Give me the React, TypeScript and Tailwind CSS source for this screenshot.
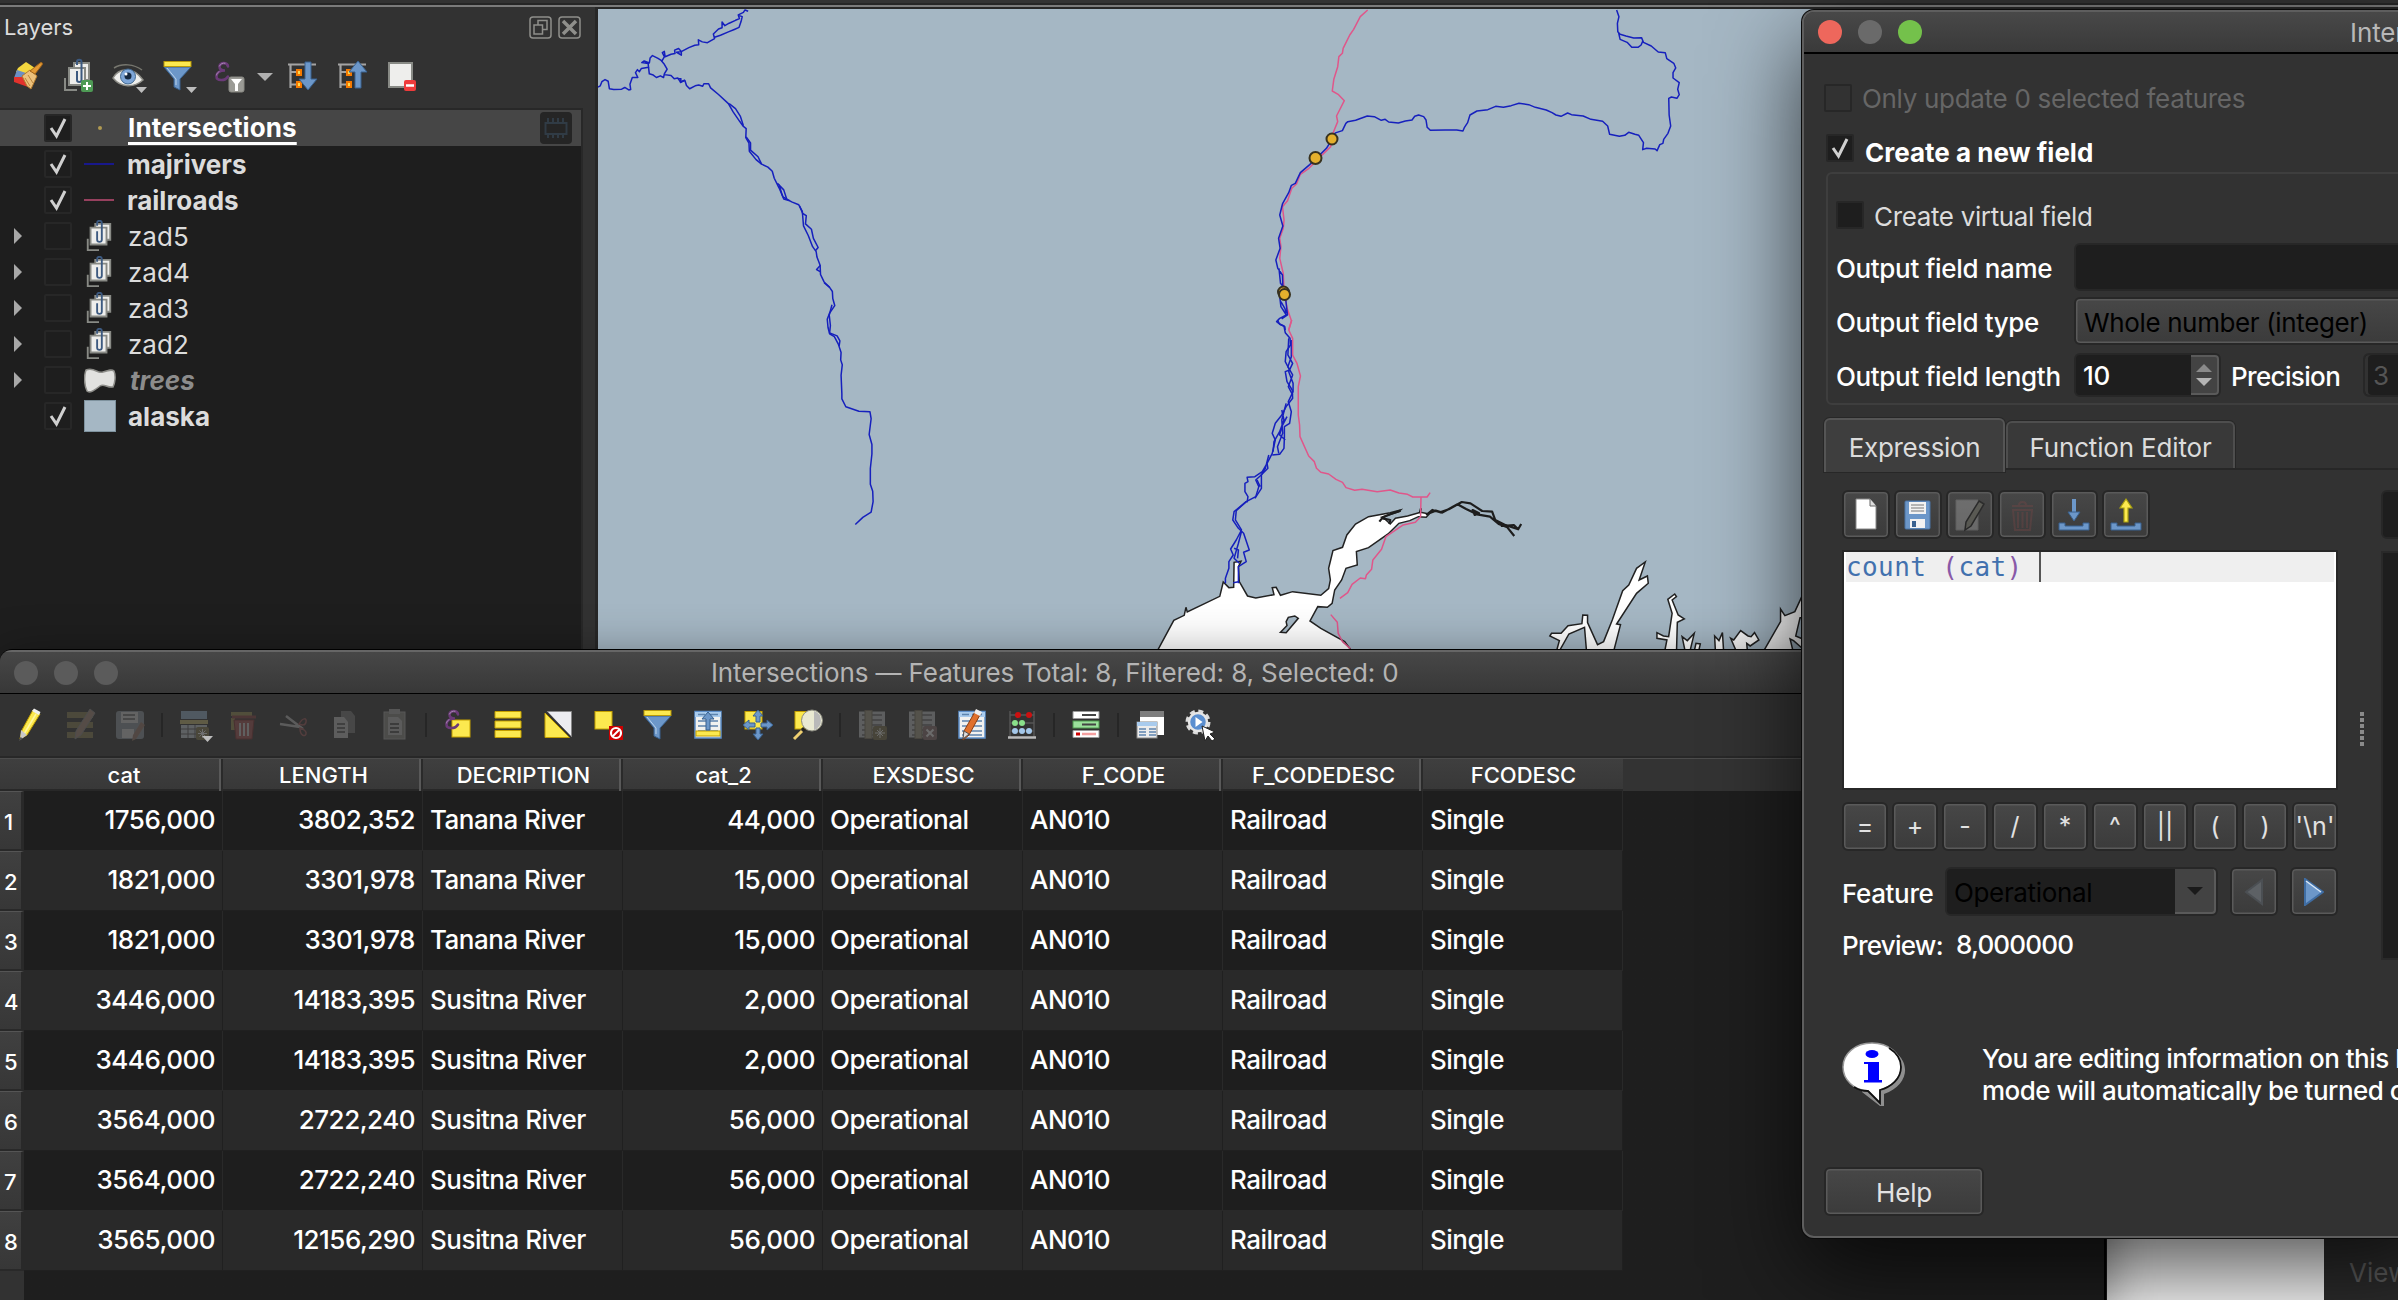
import type { ReactNode } from 'react'

/* ---------- shared pieces ---------- */

const Check = ({ className = '', on = false }: { className?: string; on?: boolean }) => (
  <span className={`flex h-7 w-7 shrink-0 items-center justify-center rounded-xs border-2 border-[#272727] ${className}`}>
    {on && (
      <svg width="20" height="22" viewBox="0 0 20 22" fill="none" stroke="#d0d0d0" strokeWidth="3">
        <path d="M3 11l5.5 8L17 2" />
      </svg>
    )}
  </span>
)

const Button = ({ className = '', children }: { className?: string; children?: ReactNode }) => (
  <div
    className={`flex items-center justify-center rounded-md border-2 border-[#272727] bg-linear-to-b from-[#474747] to-[#3b3b3b] text-[#e2e2e2] shadow-[inset_0_0_0_1.5px_#5a5a5a] ${className}`}
  >
    {children}
  </div>
)

const Ico = ({ children, dim = false }: { children: ReactNode; dim?: boolean }) => (
  <svg className={`shrink-0 ${dim ? 'opacity-30' : ''}`} width="50" height="50" viewBox="0 0 50 50">
    {children}
  </svg>
)

const Sep = () => (
  <div className="flex w-[14px] shrink-0 justify-center">
    <div className="h-6 w-0.5 bg-[#262626]" />
  </div>
)

const Caret = ({ x = 32, y = 31 }: { x?: number; y?: number }) => <path d={`M${x} ${y}h11l-5.500 6z`} fill="#bdbdbd" />

const Epsilon = ({ x, y }: { x: number; y: number }) => (
  <g transform={`translate(${x} ${y})`} fill="none" stroke="#6b3a78" strokeWidth="2.600" strokeLinecap="round">
    <path d="M13 4.500C12.500 0 5 0 4.500 4.500c0 3 2.500 4 5.500 4C5 8.500 1.500 10.500 1.500 14.500c0 4.500 8.500 5 11.500 0" />
    <path d="M4.500 4c1-2.500 3.500-3.200 5.500-2.800M1.500 13c.3-1.500 1-2.500 2.500-3.200" stroke="#a98ab5" strokeWidth="1" />
  </g>
)

const Funnel = () => (
  <>
    <path d="M11 16l10 12v8l6 3V28l11-12z" fill="#6c97c9" stroke="#38618f" strokeWidth="1" />
    <path d="M14 17l9 11v6" stroke="#b9d2ea" fill="none" />
    <rect x="11" y="10.500" width="27" height="5" fill="#fce94f" stroke="#b99a08" />
  </>
)

/* ---------- layers panel ---------- */

const GroupShape = ({ w = 32, h = 34 }: { w?: number; h?: number }) => (
  <svg width={w} height={h} viewBox="0 0 32 34">
    <path d="M4 20v12h12" fill="none" stroke="#888a85" strokeWidth="2" />
    <path d="M12 4h16v17H12z" fill="#eeeeec" stroke="#888a85" strokeWidth="2" />
    <path d="M7 8h17v18H7z" fill="#eeeeec" stroke="#888a85" strokeWidth="2" />
    <path d="M14 12v9c0 3 5 3 5 0V3c0-3-5-3-5 0v3" fill="none" stroke="#3d5a80" strokeWidth="2" />
  </svg>
)

const Tree = () => (
  <>
    <path d="M10 13.500h28M12.500 13v24M12 21h8M12 33.500h8" stroke="#a3a3a3" strokeWidth="2.200" fill="none" />
    <path d="M18 18h6v7h-6zM18 30h6v7h-6z" fill="#f57900" />
    <path d="M20 20h2v3h-2zM20 32h2v3h-2z" fill="#fcd94f" />
  </>
)

const LayersToolbar = () => (
  <div className="flex h-[50px] items-center pl-[3px]">
    <Ico>
      <path d="M15 17l8-6 9 6-6 8-13-4z" fill="#f3d73f" />
      <path d="M14 19l9 3-4 9-8-4z" fill="#6c8fc4" />
      <path d="M11 26l9 0 5 10-14-5z" fill="#e2322c" />
      <path d="M19 25l8-6 7 6-6 13-4-3z" fill="#ecc17c" stroke="#b37a2c" />
      <path d="M22 27l5 8M25 24l5 8" stroke="#b9853c" />
      <path d="M27 20l10-8c2-1 3 0 2 2l-7 9z" fill="#e39a34" stroke="#a3651a" />
    </Ico>
    <Ico>
      <path d="M12 27v12h12" fill="none" stroke="#888a85" strokeWidth="2" />
      <path d="M21 12h15v17H21z" fill="#eeeeec" stroke="#888a85" strokeWidth="2" />
      <path d="M16 17h16v17H16z" fill="#eeeeec" stroke="#888a85" strokeWidth="2" />
      <path d="M24 20v9c0 2.500 4.500 2.500 4.500 0V11c0-3-4.500-3-4.500 0v3" fill="none" stroke="#3d5a80" strokeWidth="2" />
      <rect x="28" y="29" width="12" height="12" rx="2" fill="#4e9a55" />
      <path d="M34 31v8M30 35h8" stroke="#fff" strokeWidth="2" />
    </Ico>
    <Ico>
      <path d="M10 27c6-11 21-11 30 2-9 8-22 8-30-2z" fill="#efefed" stroke="#8e8e88" strokeWidth="1.500" />
      <path d="M11 17c8-5 20-4 28 2" fill="none" stroke="#77776f" strokeWidth="1.500" />
      <circle cx="25" cy="25.500" r="7.500" fill="#7ea6d8" stroke="#41688f" />
      <circle cx="25" cy="25" r="3.500" fill="#16283f" />
      <circle cx="23" cy="23" r="1.500" fill="#fff" />
      <Caret x={33} y={36} />
    </Ico>
    <Ico>
      <Funnel />
      <Caret x={33} y={36} />
    </Ico>
    <Ico>
      <Epsilon x={12} y={11} />
      <rect x="26" y="26" width="15" height="15" rx="2" fill="#9b9b96" stroke="#8a8a84" />
      <path d="M28 28h11l-4 5v7h-3v-7z" fill="#fff" />
    </Ico>
    <svg width="25" height="50" viewBox="0 0 25 50" className="shrink-0">
      <path d="M4 22h16l-8 8z" fill="#b0b0b0" />
    </svg>
    <Ico>
      <Tree />
      <path d="M27 11h6v17h6l-9 11-9-11h6z" fill="#6c97c9" stroke="#38618f" />
    </Ico>
    <Ico>
      <Tree />
      <path d="M27 37h6V21h6l-9-11-9 11h6z" fill="#6c97c9" stroke="#38618f" />
    </Ico>
    <Ico>
      <rect x="11" y="12" width="23" height="24" fill="#eeeeec" stroke="#888a85" strokeWidth="2" />
      <rect x="26" y="29" width="12" height="11" rx="2" fill="#ef3b3b" />
      <path d="M28 34.500h8" stroke="#fff" strokeWidth="2.500" />
    </Ico>
  </div>
)

type Layer = { name: string; kind: 'point' | 'blue' | 'pink' | 'group' | 'raster' | 'fill'; on?: boolean }
const layers: Layer[] = [
  { name: 'Intersections', kind: 'point', on: true },
  { name: 'majrivers', kind: 'blue', on: true },
  { name: 'railroads', kind: 'pink', on: true },
  { name: 'zad5', kind: 'group' },
  { name: 'zad4', kind: 'group' },
  { name: 'zad3', kind: 'group' },
  { name: 'zad2', kind: 'group' },
  { name: 'trees', kind: 'raster' },
  { name: 'alaska', kind: 'fill', on: true },
]

const Symbol = ({ kind }: { kind: Layer['kind'] }) => {
  if (kind === 'point') return <span className="ml-[14px] h-1 w-1 rounded-full bg-[#b09a52]" />
  if (kind === 'blue') return <span className="h-0.5 w-[30px] bg-[#18188c]" />
  if (kind === 'pink') return <span className="h-0.5 w-[30px] bg-[#96405e]" />
  if (kind === 'fill') return <span className="h-8 w-8 border border-[#7e929e] bg-[#a5b7c4]" />
  if (kind === 'group') return <GroupShape w={30} h={32} />
  return (
    <svg width="32" height="26" viewBox="0 0 32 26">
      <path d="M2 3c9-3 11 4 17 2s9-3 11-1c2 5 1 12-1 16-6 1-9-4-13-1S6 27 3 24C0 18 0 8 2 3z" fill="#e2e2e0" stroke="#8d8d89" strokeWidth="1.500" />
    </svg>
  )
}

const LayersPanel = () => (
  <div className="flex h-full w-[597px] shrink-0 flex-col border-r-2 border-[#272727] bg-[#323232]">
    <div className="flex h-[40px] items-center justify-between pr-[14px] pl-1">
      <span className="text-[22px] text-[#dcdcdc]">Layers</span>
      <span className="flex gap-[6px]">
        <svg width="23" height="23" viewBox="0 0 23 23" fill="none" stroke="#8f8f8b" strokeWidth="1.500">
          <rect x="1" y="1" width="21" height="21" rx="3" />
          <path d="M9 9V4.500h9v9h-4M5 9h8.500v9H5z" />
        </svg>
        <svg width="23" height="23" viewBox="0 0 23 23" fill="none" stroke="#8f8f8b" strokeWidth="1.500">
          <rect x="1" y="1" width="21" height="21" rx="3" />
          <path d="M5 5l13 13M18 5L5 18" strokeWidth="3.500" />
        </svg>
      </span>
    </div>
    <div className="mt-[4px] h-[57px]">
      <LayersToolbar />
    </div>
    <div className="mr-[12px] flex-1 border-t-2 border-r-2 border-[#282828] bg-[#1e1e1e]">
      {layers.map((l) => {
        const active = l.kind === 'point'
        const expandable = l.kind === 'group' || l.kind === 'raster'
        return (
          <div key={l.name} className={`flex h-9 items-center ${active ? 'bg-[#464646]' : ''}`}>
            <span className="flex w-11 pl-[13px]">
              {expandable && (
                <svg width="9" height="16" viewBox="0 0 9 16">
                  <path d="M1 0l8 8-8 8z" fill="#a8a8a8" />
                </svg>
              )}
            </span>
            <Check on={l.on} className="bg-[#1e1e1e]" />
            <span className="ml-3 flex w-[43px] items-center">
              <Symbol kind={l.kind} />
            </span>
            <span
              className={
                active
                  ? 'pl-px text-[26px] leading-9 font-bold tracking-[0.1px] text-white underline decoration-[3px] underline-offset-[5px]'
                  : l.kind === 'group'
                    ? 'pl-px text-[26px] text-[#dcdcdc]'
                    : l.kind === 'raster'
                      ? 'pl-[3px] text-[26px] font-bold text-[#8c8c8c] italic'
                      : l.kind === 'fill'
                        ? 'pl-px text-[26px] font-bold text-[#dcdcdc]'
                        : 'text-[26px] font-bold text-[#dcdcdc]'
              }
            >
              {l.name}
            </span>
            {active && (
              <span className="mr-[9px] ml-auto flex h-8 w-8 items-center justify-center rounded-sm bg-[#252525]">
                <svg width="24" height="24" viewBox="0 0 24 24" fill="none" stroke="#303b45" strokeWidth="2">
                  <rect x="1.500" y="7" width="21" height="11" />
                  <path d="M4 2v4M9 2v4M14 2v4M19 2v4M4 19v3M9 19v3M14 19v3M19 19v3" />
                </svg>
              </span>
            )}
          </div>
        )
      })}
    </div>
  </div>
)

/* ---------- map canvas ---------- */

const Water = ({ d }: { d: string }) => <path d={d} fill="#fff" stroke="#222" strokeWidth="1.500" vectorEffect="non-scaling-stroke" />
const Line = ({ d, c, w = 1.5 }: { d: string; c: string; w?: number }) => (
  <path d={d} fill="none" stroke={c} strokeWidth={w} strokeLinejoin="round" vectorEffect="non-scaling-stroke" />
)
const RIVER = '#1620bd'
const RAIL = '#e0568a'

const MapCanvas = () => (
  <svg className="block h-full flex-1 bg-[#a5b7c4]" viewBox="598 9 1800 641" preserveAspectRatio="xMinYMin slice">
    <g transform="translate(1130 320) scale(.4337 .3333)">
      <Water d="M60 1000L101 901 125 886 129 862 132 876 207 829 215 786 228 803 239 802 240 727 256 724 250 740 252 785 271 828 290 834 332 824 328 803 337 802 347 826 375 815 440 826 458 806 462 780 458 745 468 692 490 682 500 645 520 612 550 590 600 578 624 570 620 575 580 592 590 600 600 612 612 595 640 588 670 577 690 582 683 592 665 590 645 602 620 610 595 642 550 683 522 695 524 735 498 745 488 780 472 810 466 850 455 862 433 860 415 903 440 925 495 965 515 1000Z" />
      <path d="M347 937L360 938 388 895 380 888 365 892 360 905 362 917Z" fill="#a5b7c4" stroke="#222" strokeWidth="1.500" vectorEffect="non-scaling-stroke" />
      <Water d="M982 1000L990 962 968 948 972 940 994 940 1010 917 1042 911 1044 885 1055 886 1055 908 1078 974 1092 965 1112 900 1136 812 1150 795 1168 745 1188 726 1174 780 1193 768 1195 790 1168 820 1122 912 1131 914 1114 1000 1053 1000 1048 922 1012 942 987 1000Z" />
      <Water d="M1232 1000L1238 960 1215 955 1215 938 1230 948 1242 950 1250 880 1240 838 1256 822 1260 830 1250 840 1264 885 1278 897 1262 907 1260 1000Z" />
      <Water d="M1281 1000L1273 950 1285 962 1301 940 1290 1000ZM1300 1000L1305 970 1315 972 1310 1000ZM1350 1000L1348 948 1358 962 1366 938 1369 1000ZM1400 1000L1385 955 1392 960 1408 932 1425 948 1432 950 1440 938 1450 960 1430 978 1422 970 1424 1000Z" />
      <Water d="M1458 1000L1500 905 1500 867 1510 887 1533 875 1565 785 1565 1000Z" />
      <path d="M1545 893L1535 948 1556 960 1556 893ZM1522 957L1530 962 1550 985 1550 1000 1530 1000Z" fill="#a5b7c4" stroke="#222" strokeWidth="1.500" vectorEffect="non-scaling-stroke" />
      <Line w={2.2} c="#1d1d1d" d="M683 585L697 570 715 577 735 568 765 546 785 550 812 573 835 575 842 600 865 615 895 628 902 612M690 580L705 572 720 578 755 553 775 567 800 583 830 590 850 612 870 622 886 648M790 570L805 580 795 585ZM855 618L885 615 895 628M575 605L583 592 600 583 624 572M583 595L600 600 598 612M671 565L668 580" />
      <Line c={RIVER} d="M340 0L345 12 355 18 358 38 369 55 370 75 360 95 358 125 368 150 358 155 362 185 374 210 375 235 360 260 350 285 335 310 328 340 335 360 328 400 316 430 318 445 300 468 290 480 297 500 290 530 268 545 240 575 237 600 250 625 262 640 275 690 262 697 268 725 250 740 250 790" />
      <Line c={RIVER} d="M366 55L364 105 375 130 366 155 376 190 376 215 365 245 372 275 368 310 356 320 356 350 355 385 345 403 328 405M372 60L372 110 364 140 375 165 365 200 375 225M350 270L355 300 345 335 332 365 330 395M360 250L350 300 352 340 340 380 343 400M362 290L350 320 345 345 358 360" />
      <Line c={RIVER} d="M316 430L305 455 288 470 270 472 272 485 265 490 265 515 272 530 270 547M320 405L312 445 303 465 303 505 288 535M293 480L300 500" />
      <Line c={RIVER} d="M268 545L245 572 243 600 257 630 245 660 232 687 238 705 228 725 228 745 220 775 220 790M257 635L250 670 240 715 252 730M240 685L250 690 248 715M238 788L250 785" />
      <Line c={RAIL} d="M373 0L366 30 375 55 375 105 385 130 393 168 388 200 388 285 391 315 392 350 412 408 425 425 430 445 440 457 458 462 475 478 490 487 498 503 518 511 535 508 570 515 600 510 620 519 640 523 652 531 685 531 692 518M671 531L670 590 658 607 630 615 590 650 580 688 560 720 557 748 545 765 543 776 531 774 512 793 502 818 484 835M463 884L478 907 480 940 490 965 508 986" />
    </g>
    <g transform="translate(590 0) scale(.3954 .4146)">
      <Line c={RIVER} d="M20 210L26 207 30 197 38 192 46 196 49 214 60 216 80 215 88 211 98 217 103 216 101 203 107 187 121 187 115 175 120 168 125 173 130 165 148 162 147 153 131 151 137 147 150 152 152 140 158 134 172 141 182 147 188 137 183 127 188 124 190 137 205 131 215 129 214 121 224 117 231 124 231 133 219 126 232 124 250 115 265 109 275 108 274 96 284 101 297 103 315 93 312 82 325 70 334 67 334 53 341 62 352 56 368 49 378 45 375 36 388 30 392 24 400 27M315 90L330 85 350 77 365 71 377 66 382 52 385 40 376 37" />
      <Line c={RIVER} d="M148 162L150 178 160 181 168 187 178 183 186 187 188 178 195 167 188 155 180 146M188 180L205 182 213 190 222 188 228 197 240 194 244 206 252 214 266 207 275 205 285 208 288 202 300 202 305 212 325 228 350 250 362 270 378 292 388 305 395 310 394 332 402 345 403 365 420 385 434 396 450 403 461 413 466 430 478 453 488 475 510 487 528 494 537 510 540 545 552 568 563 595 572 607 574 620 582 640 583 662 592 680 606 693 613 703 614 720 619 737 606 755 600 770 602 790 606 805 618 812 628 830 635 850 634 868 638 880 635 905 637 950 637 962 647 981 680 992 708 993 711 1010 706 1048 713 1072 713 1095 709 1130 709 1168 715 1185 716 1210 711 1235 690 1248 671 1265" />
      <Line c={RIVER} d="M222 190L230 190 229 199 240 193M352 250L368 262 380 280 388 303M395 330L406 345 406 362 425 378 434 396M474 442L490 458 498 482M478 445L486 470 490 480 505 484M530 497L538 515 547 520 545 540 560 553 565 575 577 597 570 605M583 640L573 650 582 655M592 682L606 693M612 735L605 760 608 785 606 803 625 810 632 822 630 835" />
    </g>
    <g transform="translate(1200 0) scale(.389 .3333)">
      <Line c={RAIL} d="M431 30L412 50 395 88 385 105 368 145 366 160 357 170 354 200 344 238 340 273 355 283 371 302 351 348 354 365 347 385 340 405 336 440 312 467 280 505 258 523 248 552 236 565 225 602 212 620 216 660 214 685 205 715 208 740 205 775 214 820 216 870 224 925 235 962 228 990" />
      <Line c={RIVER} d="M340 405L350 398 366 392 375 370 380 365 400 361 430 348 448 350 466 361 476 358 485 366 510 369 528 363 545 360 552 349 562 345 575 350 581 360 584 382 592 391 630 390 660 390 676 393 680 382 688 368 694 345 712 333 740 329 760 319 780 322 800 317 820 310 845 314 862 322 890 330 905 338 915 345 928 349 945 339 955 344 985 348 1005 358 1035 364 1048 378 1053 403 1078 409 1092 406 1102 397 1118 403 1128 406 1140 428 1138 449 1148 445 1170 447 1175 452 1182 434 1190 430 1192 418 1203 400 1210 378 1206 345 1205 295 1212 291 1226 295 1232 284 1228 268 1232 248 1216 234 1216 218 1223 204 1218 190 1200 176 1196 158 1178 156 1160 138 1140 127 1135 113 1115 114 1095 108 1080 103 1074 95 1073 70 1077 50 1071 30M1076 98L1080 118 1098 127 1110 142 1126 142 1134 135 1138 124" />
      <Line c={RIVER} d="M340 417L325 445 300 474 282 494 258 518 245 550 235 556 228 578 212 612 205 645 213 678 202 715 206 745 195 780 200 805 212 825 213 860 205 890 208 920 222 945 205 955 197 965 205 973 218 980 219 990M203 805L207 850 215 862M220 895L225 945 210 957M208 905L218 925 222 940" />
    </g>
    <g fill="#e5b02d" stroke="#38321f" strokeWidth="2">
      <circle cx="1332" cy="139" r="5.500" />
      <circle cx="1315.500" cy="158" r="6" />
      <circle cx="1283.500" cy="292" r="5.500" />
      <circle cx="1284.500" cy="294.500" r="5.500" />
    </g>
  </svg>
)

/* ---------- attribute table ---------- */

const Trash = () => (
  <>
    <path d="M15 20h20l-2 19H17z" fill="#a35050" stroke="#7a2c2c" />
    <path d="M21 23v13M25 23v13M29 23v13" stroke="#ccc" strokeWidth="2" />
    <path d="M13 17h24" stroke="#8a4040" strokeWidth="3" />
  </>
)
const Sheet = () => (
  <>
    <rect x="12" y="11.500" width="26" height="26.500" fill="#f1f1ef" stroke="#5d8fc9" strokeWidth="1.500" />
    <path d="M12 14.500h26" stroke="#a9cbed" strokeWidth="5" />
    <path d="M15 14.500h7M25 14.500h10M15 21h20M15 26h20M15 31h20M15 35h20" stroke="#5d83ad" strokeWidth="1.500" />
  </>
)
const ColumnIcon = () => (
  <>
    <rect x="12" y="11.500" width="26" height="26" fill="#c0c4c8" />
    <path d="M15 15h20M15 20h20M15 25h20M15 30h20M15 35h20" stroke="#666" strokeWidth="1.500" />
    <rect x="18" y="10.500" width="7" height="28" fill="#a39c86" stroke="#77705a" />
  </>
)
const Y = '#fce94f'
const YS = '#c4a000'

const TableToolbar = () => (
  <div className="flex h-[64px] shrink-0 items-center border-b-2 border-[#282828] bg-[#323232] pl-[5px]">
    <Ico>
      <path d="M28 10l7 4-13 21-7 4 2-9z" fill={Y} stroke={YS} />
      <path d="M31 14L19 34" stroke="#fff6a0" strokeWidth="1.500" />
      <path d="M27 11l2-2.500 6.500 3.500-1.500 3z" fill="#f0f0f0" />
      <path d="M16 30l6 5-7 5z" fill="#c9c9c9" />
      <path d="M14 41l1.500-4 2.500 1.500z" fill="#555" />
    </Ico>
    <Ico dim>
      <path d="M12 12h26v6H12zM12 22h26v6H12zM12 32h26v6H12z" fill="#8a8050" />
      <path d="M35 9l5 4-14 22-6 4 1-8z" fill="#a58a7a" stroke="#888" />
    </Ico>
    <Ico dim>
      <rect x="11" y="11" width="28" height="28" rx="3" fill="#8d979f" />
      <path d="M16 12h17v11H16zM17 29h12v9H17z" fill="#d5d5d5" />
      <path d="M18 15h12M18 19h12" stroke="#777" strokeWidth="2" />
      <path d="M36 22l4 3-9 14-4 2 1-6z" fill="#9a7a6a" />
    </Ico>
    <Sep />
    <Ico>
      <g opacity=".35">
        <rect x="12" y="11" width="26" height="8" fill="#8aa2ba" />
        <rect x="11" y="20" width="28" height="4" fill="#b3a86a" />
        <rect x="12" y="25" width="26" height="13" fill="#b0b8c0" />
        <path d="M12 29h26M12 34h26M19 25v13M26 25v13" stroke="#555" />
        <rect x="27" y="27" width="13" height="13" rx="2" fill="#77704a" />
        <path d="M33.500 29v9M29 33.500h9M30.500 30.500l6 6M36.500 30.500l-6 6" stroke="#ddd" />
      </g>
      <Caret x={33} y={36} />
    </Ico>
    <Ico dim>
      <path d="M12 12h21v4H12zM12 18h4v12h-4z" fill="#9a8f50" />
      <Trash />
    </Ico>
    <Ico dim>
      <path d="M11 24l20 3M17 16l17 13" stroke="#bbb" strokeWidth="2.500" />
      <path d="M30 24c4-7 8-6 7-2s-4 3-7 2zM31 28c0 8 5 9 6 6s-3-5-6-6z" fill="none" stroke="#a05858" strokeWidth="1.500" />
    </Ico>
    <Ico dim>
      <path d="M22 11h10l4 5v17H22z" fill="#7a7a7a" />
      <path d="M15 17h10l4 5v16H15z" fill="#c2c2c2" />
      <path d="M18 24h8M18 28h8M18 32h8" stroke="#444" strokeWidth="1.500" />
    </Ico>
    <Ico dim>
      <rect x="15" y="12" width="21" height="27" fill="#8a8a84" stroke="#aaa" />
      <rect x="20" y="9" width="11" height="5" fill="#aaa" />
      <path d="M19 17h10l4 4v14H19z" fill="#bbb" />
      <path d="M21 24h9M21 28h9M21 32h9" stroke="#333" strokeWidth="1.500" />
    </Ico>
    <Sep />
    <Ico>
      <rect x="19" y="20" width="18" height="17" fill={Y} stroke={YS} />
      <Epsilon x={12} y={10} />
    </Ico>
    <Ico>
      <path d="M12 11.500h26v6.500H12zM12 21h26v7H12zM12 30.500h26v7H12z" fill={Y} stroke={YS} />
    </Ico>
    <Ico>
      <path d="M14 11.500h24.500V37z" fill="#ececf0" stroke="#888" />
      <path d="M12 13v24.500h24.500z" fill={Y} stroke={YS} />
      <path d="M13 11.500l25 26" stroke="#333" strokeWidth="1.500" />
    </Ico>
    <Ico>
      <rect x="12" y="11.500" width="17" height="17.500" fill={Y} stroke={YS} />
      <rect x="26" y="26" width="14" height="14" fill="#cc0000" />
      <circle cx="33" cy="33" r="5" fill="none" stroke="#fff" strokeWidth="2.200" />
      <path d="M29.500 36.500l7-7" stroke="#fff" strokeWidth="2" />
    </Ico>
    <Ico>
      <Funnel />
    </Ico>
    <Ico>
      <Sheet />
      <rect x="13" y="31" width="24" height="5" fill={Y} stroke={YS} />
      <path d="M25 12l6 7h-4v11h-4V19h-4z" fill="#6c97c9" stroke="#38618f" />
    </Ico>
    <Ico>
      <rect x="12" y="11.500" width="17" height="17.500" fill={Y} stroke={YS} />
      <path d="M25 10l5 6h-3v6h-4v-6h-3zM25 40l5-6h-3v-6h-4v6h-3zM10 25l6-5v3h6v4h-6v3zM40 25l-6-5v3h-6v4h6v3z" fill="#6c97c9" stroke="#38618f" />
    </Ico>
    <Ico>
      <rect x="12" y="11.500" width="17" height="17.500" fill={Y} stroke={YS} />
      <path d="M19 31l-8 8" stroke="#f0d070" strokeWidth="3" />
      <circle cx="29" cy="20.500" r="10.500" fill="#e9e9d2" stroke="#8a8a80" />
      <path d="M31 11a10 10 0 0 1 0 19z" fill="#b9b9b9" />
      <path d="M19 28l3 3" stroke="#222" strokeWidth="3" />
    </Ico>
    <Sep />
    <Ico dim>
      <ColumnIcon />
      <rect x="26" y="26" width="14" height="14" rx="2" fill="#77704a" />
      <path d="M33 28v10M28 33h10M30 30l6 6M36 30l-6 6" stroke="#eee" />
    </Ico>
    <Ico dim>
      <ColumnIcon />
      <rect x="26" y="26" width="14" height="14" rx="2" fill="#8a7070" />
      <path d="M29.500 29.500l7 7M36.500 29.500l-7 7" stroke="#eee" strokeWidth="2" />
    </Ico>
    <Ico>
      <Sheet />
      <path d="M29 10l5 3-12 22-6 5 1-9z" fill="#e0702c" stroke="#8c3d10" />
      <path d="M29 9l6 3-2 4-6-3z" fill="#eee" />
      <path d="M17 31l5 3-6 5z" fill="#ddd" stroke="#555" />
    </Ico>
    <Ico>
      <path d="M13 11v26M37 11v26M13 15h24M13 23h24M13 31h24" stroke="#555" strokeWidth="1.500" />
      <path d="M11 37.500h28" stroke="#bbb" strokeWidth="2.500" />
      <g fill="#cc1010"><circle cx="21" cy="15" r="3" /><circle cx="32" cy="15" r="3" /></g>
      <g fill="#8ae08a"><circle cx="18" cy="23" r="3" /><circle cx="25" cy="23" r="3" /></g>
      <g fill="#a5c8ea"><circle cx="18" cy="31" r="3" /><circle cx="25" cy="31" r="3" /><circle cx="32" cy="31" r="3" /></g>
    </Ico>
    <Sep />
    <Ico>
      <path d="M12 11.500h26v7H12zM12 30.500h26v7H12z" fill="#fff" stroke="#999" />
      <rect x="12" y="21" width="26" height="7" fill="#9be09b" stroke="#4e9a4e" />
      <path d="M21 15h14M21 24.500h14" stroke="#444" strokeWidth="2" />
      <path d="M21 34h14" stroke="#f5a0a0" strokeWidth="2.500" />
      <path d="M15 34h4" stroke="#c00" strokeWidth="3" />
    </Ico>
    <Sep />
    <Ico>
      <rect x="15" y="11" width="24" height="24" fill="#fff" />
      <rect x="15" y="11" width="24" height="6" fill="#7e7e7e" />
      <rect x="12" y="22" width="20" height="16" fill="#ececec" stroke="#888" />
      <rect x="12" y="22" width="20" height="4" fill="#a9cbed" />
      <path d="M14 29h7M24 29h7M14 32h7M24 32h7M14 35h7M24 35h7" stroke="#5d83ad" strokeWidth="1.500" />
    </Ico>
    <Ico>
      <circle cx="23" cy="22" r="11" fill="none" stroke="#dcdcdc" strokeWidth="3" strokeDasharray="5 3.640" />
      <circle cx="23" cy="22" r="9" fill="#5b8fd0" stroke="#e6e6e6" strokeWidth="2.500" />
      <path d="M20.500 17v10l7-5z" fill="#fff" />
      <path d="M27 26l13 6-5 2 5 5-3 2-4-5-3 5z" fill="#fff" stroke="#222" />
    </Ico>
  </div>
)

const columns = ['cat', 'LENGTH', 'DECRIPTION', 'cat_2', 'EXSDESC', 'F_CODE', 'F_CODEDESC', 'FCODESC']
const rows = [
  ['1756,000', '3802,352', 'Tanana River', '44,000'],
  ['1821,000', '3301,978', 'Tanana River', '15,000'],
  ['1821,000', '3301,978', 'Tanana River', '15,000'],
  ['3446,000', '14183,395', 'Susitna River', '2,000'],
  ['3446,000', '14183,395', 'Susitna River', '2,000'],
  ['3564,000', '2722,240', 'Susitna River', '56,000'],
  ['3564,000', '2722,240', 'Susitna River', '56,000'],
  ['3565,000', '12156,290', 'Susitna River', '56,000'],
].map((r) => [...r, 'Operational', 'AN010', 'Railroad', 'Single'])
const numeric = [true, true, false, true, false, false, false, false]

const GRID = 'grid grid-cols-[24px_199px_repeat(7,200px)]'

const AttributeTable = () => (
  <div className="absolute top-[649px] left-0 flex h-[651px] w-[2106px] flex-col overflow-hidden rounded-tl-xl border-t border-r-2 border-black bg-[#1e1e1e] shadow-[0_10px_50px_rgba(0,0,0,0.45)]">
    <div className="flex h-[43px] shrink-0 items-center border-t-2 border-[#666] bg-linear-to-b from-[#474747] to-[#383838]">
      <span className="ml-[14px] flex w-[104px] gap-4">
        <i className="h-6 w-6 shrink-0 rounded-full bg-[#5b5b5b]" />
        <i className="h-6 w-6 shrink-0 rounded-full bg-[#5b5b5b]" />
        <i className="h-6 w-6 shrink-0 rounded-full bg-[#5b5b5b]" />
      </span>
      <span className="ml-[593px] text-[26px] tracking-[-0.11px] whitespace-pre text-[#b4b4b4]">Intersections — Features Total: 8, Filtered: 8, Selected: 0</span>
    </div>
    <div className="h-px shrink-0 bg-black" />
    <TableToolbar />
    <div className="h-[33px] shrink-0 border-t border-[#4c4c4c] bg-[#333]">
      <div className={`${GRID} h-[32px] w-[1623px] border-b-2 border-[#282828] bg-linear-to-b from-[#3f3f3f] to-[#383838]`}>
        <span />
        {columns.map((c) => (
          <span key={c} className="mr-[2px] flex items-center justify-center border-r-2 border-[#595959] pl-[5px] text-[22px] font-medium text-white shadow-[2px_0_0_#2a2a2a] last:border-transparent last:shadow-none">
            {c}
          </span>
        ))}
      </div>
    </div>
    <div className="flex flex-1 flex-col bg-linear-to-r from-[#323232] from-[24px] to-[#1e1e1e] to-[24px]">
      {rows.map((r, i) => (
        <div key={i} className={`${GRID} h-[60px] w-[1623px] ${i % 2 ? 'bg-[#292929]' : 'bg-[#1e1e1e]'}`}>
          <span className="flex items-center border-t border-r-3 border-b-2 border-t-[#555] border-r-[#292929] border-b-[#292929] bg-linear-to-b from-[#404040] to-[#373737] pt-1 pl-1 text-[22px] font-medium text-white">
            {i + 1}
          </span>
          {r.map((v, j) => (
            <span
              key={j}
              className={`flex items-center border-r border-b pb-0.5 text-[26px] font-medium text-white ${i % 2 ? 'border-[#202020]' : 'border-[#292929]'} ${
                numeric[j] ? 'justify-end pr-[7px] tracking-[-0.5px]' : 'pl-[7px] tracking-[-0.5px]'
              }`}
            >
              {v}
            </span>
          ))}
        </div>
      ))}
    </div>
  </div>
)

/* ---------- field calculator ---------- */

const ops = ['=', '+', '-', '/', '*', '^', '||', '(', ')', "'\\n'"]

const BtnIco = ({ children, dim = false }: { children: ReactNode; dim?: boolean }) => (
  <Button className="h-[49px] w-[48px]">
    <svg className={dim ? 'opacity-35' : ''} width="36" height="36" viewBox="0 0 36 36">
      {children}
    </svg>
  </Button>
)

const LABEL = 'text-[26px] font-medium tracking-[-0.35px] whitespace-nowrap text-white'

const Calculator = () => (
  <div className="absolute top-[10px] left-[1802px] flex h-[1228px] w-[640px] flex-col overflow-hidden rounded-xl border-2 border-[#5e5e5e] bg-[#323232] shadow-[0_0_0_1px_#0a0a0a,0_32px_90px_rgba(0,0,0,0.7)]">
    <div className="flex h-[42px] shrink-0 items-center gap-4 border-b-2 border-black bg-linear-to-b from-[#484848] to-[#3a3a3a] pl-[14px]">
      <i className="h-6 w-6 shrink-0 rounded-full bg-[#ee675c]" />
      <i className="h-6 w-6 shrink-0 rounded-full bg-[#6a6a6a]" />
      <i className="h-6 w-6 shrink-0 rounded-full bg-[#74c14b]" />
      <span className="ml-[412px] text-[26px] tracking-[-0.1px] text-[#b8b8b8]">Intersections</span>
    </div>
    <div className="mt-[30px] ml-5 flex h-7 items-center gap-[10px]">
      <Check />
      <span className="pt-px text-[26px] tracking-[-0.31px] whitespace-nowrap text-[#666]">Only update 0 selected features</span>
    </div>
    <div className="mt-[22px] ml-[22px] flex h-7 items-center gap-[11px]">
      <Check on className="bg-[#1e1e1e]" />
      <span className="pt-[8px] text-[26px] font-bold whitespace-nowrap text-white">Create a new field</span>
    </div>
    <div className="mt-[10px] ml-[22px] flex h-[233px] shrink-0 flex-col rounded-md border-2 border-[#3e3e3e] pt-[27px] pl-2">
      <div className="flex h-7 items-center gap-[10px]">
        <Check className="bg-[#1e1e1e]" />
        <span className="pt-[3px] text-[26px] tracking-[-0.35px] text-[#dcdcdc]">Create virtual field</span>
      </div>
      <div className="mt-[14px] flex h-12 items-center">
        <span className={`w-[238px] shrink-0 pt-[3px] ${LABEL}`}>Output field name</span>
        <span className="h-12 w-[400px] shrink-0 rounded-md border-2 border-[#272727] bg-[#1e1e1e]" />
      </div>
      <div className="mt-[6px] flex h-12 items-center">
        <span className={`w-[238px] shrink-0 pt-[3px] ${LABEL}`}>Output field type</span>
        <Button className="h-12 w-[400px] shrink-0 justify-start! pl-[8px]">
          <span className="pt-0.5 text-[26px] tracking-[-0.37px] text-black">Whole number (integer)</span>
        </Button>
      </div>
      <div className="mt-[8px] flex h-11 items-center">
        <span className={`w-[238px] shrink-0 pt-[3px] ${LABEL}`}>Output field length</span>
        <span className="flex h-11 w-[147px] shrink-0 items-center justify-between rounded-md border-2 border-[#272727] bg-[#1e1e1e] pl-[7px]">
          <span className={LABEL}>10</span>
          <span className="flex h-full w-7 flex-col items-center justify-evenly rounded-r-sm border-2 border-l-0 border-[#5a5a5a] bg-[#434343]">
            <svg width="16" height="8" viewBox="0 0 16 8"><path d="M0 8l8-8 8 8z" fill="#8a8a8a" /></svg>
            <svg width="16" height="8" viewBox="0 0 16 8"><path d="M0 0l8 8 8-8z" fill="#b4b4b4" /></svg>
          </span>
        </span>
        <span className="ml-[10px] w-[132px] shrink-0 pt-[3px] text-[26px] font-medium tracking-[-0.65px] text-white">Precision</span>
        <span className="flex h-[44px] w-[100px] shrink-0 items-center rounded-md border-2 border-[#272727] bg-[#1e1e1e] pl-[8px] text-[26px] text-[#555] shadow-[inset_3px_0_0_#323232]">3</span>
      </div>
    </div>
    <div className="mt-[13px] ml-[20px] flex h-[54px] shrink-0 items-start">
      <span className="flex h-[54px] w-[181px] shrink-0 items-center justify-center rounded-t-md border-2 border-b-0 border-[#555] bg-[#3e3e3e] pt-0.5 text-[26px] tracking-[-0.35px] text-[#dcdcdc] shadow-[0_0_0_1px_#272727]">
        Expression
      </span>
      <span className="flex h-[52px] flex-1 items-end border-b-2 border-[#272727]">
        <span className="ml-px flex h-[47px] w-[229px] shrink-0 items-center justify-center rounded-t-md border-2 border-b-0 border-[#4e4e4e] bg-[#393939] pt-[3px] text-[26px] tracking-[-0.17px] text-[#dcdcdc] shadow-[0_0_0_1px_#272727]">
          Function Editor
        </span>
      </span>
    </div>
    <div className="mt-[18px] ml-[38px] flex h-[470px] shrink-0">
      <div className="flex w-[496px] shrink-0 flex-col">
        <div className="flex gap-[4px]">
          <BtnIco>
            <path d="M8 2h14l6 7v23H8z" fill="#fff" stroke="#888" />
            <path d="M22 2v7h6" fill="#ddd" stroke="#666" />
          </BtnIco>
          <BtnIco>
            <rect x="5" y="4" width="25" height="28" rx="1" fill="#6c97c9" stroke="#4a74a5" />
            <path d="M9 5h17v12H9zM10 22h15v9H10z" fill="#f2f2f2" />
            <path d="M11 8h13M11 11h13M11 14h13" stroke="#777" strokeWidth="1.200" />
            <rect x="12" y="24" width="4" height="6" fill="#39618f" />
          </BtnIco>
          <BtnIco dim>
            <path d="M4 3h22v30H4z" fill="#bbb" stroke="#999" />
            <path d="M27 4l5 3-13 22-6 4 1-8z" fill="#888877" stroke="#000" strokeWidth="1.500" />
          </BtnIco>
          <BtnIco dim>
            <path d="M9 13h19l-2 20H11zM14 15v16M18.500 15v16M23 15v16M8 9h21M15 8c0-4 7-4 7 0" fill="none" stroke="#7c4646" strokeWidth="2" />
          </BtnIco>
          <BtnIco>
            <path d="M18 2v14" stroke="#6c97c9" strokeWidth="4" />
            <path d="M12 15h12l-6 9z" fill="#6c97c9" stroke="#38618f" />
            <path d="M3 26h6v3h18v-3h6v7H3z" fill="#6c97c9" stroke="#38618f" />
          </BtnIco>
          <BtnIco>
            <path d="M16 25V11h-4l6-9 6 9h-4v14z" fill="#fce94f" stroke="#a8a010" strokeWidth="1.200" />
            <path d="M3 26h6v3h18v-3h6v7H3z" fill="#6c97c9" stroke="#38618f" />
          </BtnIco>
        </div>
        <div className="mt-[11px] h-[241px] border-2 border-[#272727] bg-white px-0.5">
          <div className="flex h-[30px] items-center bg-[#efefef] font-['DejaVu_Sans_Mono','Liberation_Mono',monospace] text-[26px] tracking-[0.4px] whitespace-pre text-[#4271ae]">
            <span>
              count <span className="text-[#8959a8]">(</span>cat<span className="text-[#8959a8]">)</span>{' '}
            </span>
            <i className="h-[30px] w-0.5 bg-[#555]" />
          </div>
        </div>
        <div className="mt-[12px] flex h-[49px] justify-between">
          {ops.map((o) => (
            <Button key={o} className="w-[46px] text-[25px]">
              <span className="pt-px">{o}</span>
            </Button>
          ))}
        </div>
        <div className="mt-[16px] flex h-[49px] items-center">
          <span className={`w-[103px] shrink-0 pt-1 ${LABEL}`}>Feature</span>
          <span className="flex h-[49px] w-[273px] shrink-0 items-center justify-between rounded-md border-2 border-[#272727] bg-[#1e1e1e] pl-[7px]">
            <span className="pt-0.5 text-[26px] tracking-[-0.35px] text-black">Operational</span>
            <span className="flex h-full w-[41px] items-center justify-center rounded-r-sm border-r-2 border-b-2 border-[#5a5a5a] bg-[#434343]">
              <svg width="16" height="8" viewBox="0 0 16 8"><path d="M0 0l8 8 8-8z" fill="#1a1a1a" /></svg>
            </span>
          </span>
          <Button className="ml-[12px] h-[49px] w-[48px]">
            <svg width="20" height="28" viewBox="0 0 20 28"><path d="M18 2v24L2 14z" fill="#5d6165" stroke="#4b4f53" strokeWidth="2" /></svg>
          </Button>
          <Button className="ml-auto h-[49px] w-[48px]">
            <svg width="20" height="28" viewBox="0 0 20 28"><path d="M1 1v26l18-13z" fill="#6c97c9" stroke="#3f6da3" strokeWidth="2" /><path d="M2 3l15 11" stroke="#dbe8f5" strokeWidth="1.500" /></svg>
          </Button>
        </div>
        <div className="mt-[12px] flex h-[32px] items-center">
          <span className="w-[114px] pt-0.5 text-[26px] font-medium tracking-[-0.75px] text-white">Preview:</span>
          <span className="text-[26px] font-medium tracking-[-0.8px] text-white">8,000000</span>
        </div>
      </div>
      <div className="mt-[222px] ml-[22px] flex w-[21px] shrink-0 flex-col gap-[2px]">
        {[0, 1, 2, 3, 4, 5].map((i) => (
          <i key={i} className="h-1 w-1 shrink-0 bg-[#8a8a8a]" />
        ))}
      </div>
      <div className="flex w-20 shrink-0 flex-col gap-[12px]">
        <div className="h-[49px] rounded-md border-2 border-[#272727] bg-[#1e1e1e]" />
        <div className="h-[410px] border-2 border-[#292929] bg-[#1e1e1e]" />
      </div>
    </div>
    <div className="mt-[82px] ml-[38px] flex h-[64px] shrink-0">
      <svg className="shrink-0" width="64" height="64" viewBox="0 0 64 64">
        <path d="M36 4c34 5 36 38 6 48v12h-4L20 50z" fill="#8f8f8f" />
        <path d="M30 1c17 0 29 11 29 24 0 12-10 20-21 23v13L26 49C12 48 1 38 1 25S13 1 30 1z" fill="#fff" stroke="#999" strokeWidth="1.500" />
        <path d="M47 6c8 5 12 11 12 19 0 12-10 20-21 23v13L26 49c-6 0-11-2-14-4" fill="none" stroke="#111" strokeWidth="1.800" />
        <ellipse cx="30" cy="12" rx="6.500" ry="4" fill="#00f" />
        <path d="M22 20h15v18h3v2.500H22V38h4V22h-4z" fill="#00f" />
      </svg>
      <div className="ml-[76px] pt-px text-[26px] leading-8 font-medium tracking-[-0.52px] whitespace-nowrap text-white">
        You are editing information on this layer
        <br />
        mode will automatically be turned on.
      </div>
    </div>
    <Button className="mt-[61px] ml-5 h-[49px] w-[160px] shrink-0 text-[26px] tracking-[-0.2px]">
      <span className="pt-0.5">Help</span>
    </Button>
  </div>
)

export default function App() {
  return (
    <div className="relative flex h-[1300px] w-[2398px] flex-col overflow-hidden bg-[#1e1e1e] font-['Inter',sans-serif]">
      <div className="h-[3px] shrink-0 bg-[#333]" />
      <div className="h-0.5 shrink-0 bg-[#262626]" />
      <div className="h-0.5 shrink-0 bg-[#7b7b7b]" />
      <div className="flex h-[643px] shrink-0">
        <LayersPanel />
        <div className="flex flex-1 border-t-2 border-l border-[#272727]">
          <MapCanvas />
        </div>
      </div>
      <div className="mt-auto ml-[2107px] flex h-[100px] shrink-0 bg-[#2d2d2d]">
        <div className="w-[217px] shrink-0 bg-white" />
        <div className="flex flex-1 items-end pb-[8px] pl-[25px] text-[26px] text-[#606060]">View</div>
      </div>
      <AttributeTable />
      <Calculator />
    </div>
  )
}
